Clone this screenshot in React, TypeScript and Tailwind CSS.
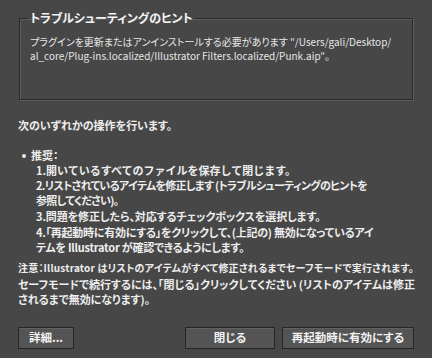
import React from "react";

const font = { fontFamily: '"Noto Sans CJK JP", "Noto Sans", sans-serif', fontFeatureSettings: '"palt"' };

function Btn({ children, w }: { children: React.ReactNode; w: string }) {
  return (
    <button
      className={`h-[22px] ${w} border border-[#262626] bg-[#545454] text-[11.5px] font-bold leading-none text-[#f2f2f2] shadow-[inset_0_1px_0_#626262]`}
    >
      {children}
    </button>
  );
}

export default function App() {
  return (
    <div className="flex h-[358px] w-[442px] bg-white" style={font}>
      <div className="flex h-[358px] w-[432px] flex-col bg-[#474747] text-[#eeeeee]">
        <fieldset className="mx-[19px] mt-[11px] h-[89px] border border-[#2b2b2b] pl-[8px] pr-[8px] shadow-[1px_1px_0_#5c5c5c,inset_1px_1px_0_#5c5c5c]">
          <legend className="px-[2px] text-[12px] font-bold leading-[14px] text-[#f4f4f4]">
            トラブルシューティングのヒント
          </legend>
          <div className="mt-[10px] pl-[2px] text-[10px] leading-[14px] text-[#e6e6e6] whitespace-nowrap">
            プラグインを更新またはアンインストールする必要があります "/Users/gali/Desktop/
            <br />
            al_core/Plug-ins.localized/Illustrator Filters.localized/Punk.aip"。
          </div>
        </fieldset>

        <div className="ml-[18px] mt-[18px] text-[11px] font-bold leading-[15px] whitespace-nowrap">
          次のいずれかの操作を行います。
        </div>

        <div className="ml-[22px] mt-[15px] flex items-center gap-[5px] text-[11px] font-bold leading-[15px]">
          <span className="h-[4px] w-[4px] rounded-full bg-[#e8e8e8]" />
          <span>推奨：</span>
        </div>

        <div className="ml-[36px] flex flex-col text-[11px] font-bold leading-[15px] whitespace-nowrap">
          <div className="[font-feature-settings:normal]">1.開いているすべてのファイルを保存して閉じます。</div>
          <div className="tracking-[-0.7px]">
            2.リストされているアイテムを修正します (トラブルシューティングのヒントを
            <br />
            参照してください)。
          </div>
          <div className="mt-[1px] tracking-[-0.1px]">3.問題を修正したら、対応するチェックボックスを選択します。</div>
          <div className="mt-[1px] tracking-[-0.25px]">
            4.「再起動時に有効にする」をクリックして、(上記の) 無効になっているアイ
            <br />
            テムを Illustrator が確認できるようにします。
          </div>
        </div>

        <div className="ml-[18px] mt-[5px] text-[10px] font-bold leading-[15px] tracking-[0.2px] whitespace-nowrap">
          注意：Illustrator はリストのアイテムがすべて修正されるまでセーフモードで実行されます。
        </div>

        <div className="ml-[18px] mt-[2px] text-[11px] font-bold leading-[15px] whitespace-nowrap">
          セーフモードで続行するには、「閉じる」クリックしてください (リストのアイテムは修正
          <br />
          されるまで無効になります)。
        </div>

        <div className="mx-[18px] mt-[20px] flex items-center">
          <Btn w="w-[56px]">詳細...</Btn>
          <div className="flex-1" />
          <Btn w="w-[90px]">閉じる</Btn>
          <div className="w-[7px]" />
          <Btn w="w-[132px]">再起動時に有効にする</Btn>
        </div>
      </div>
    </div>
  );
}
